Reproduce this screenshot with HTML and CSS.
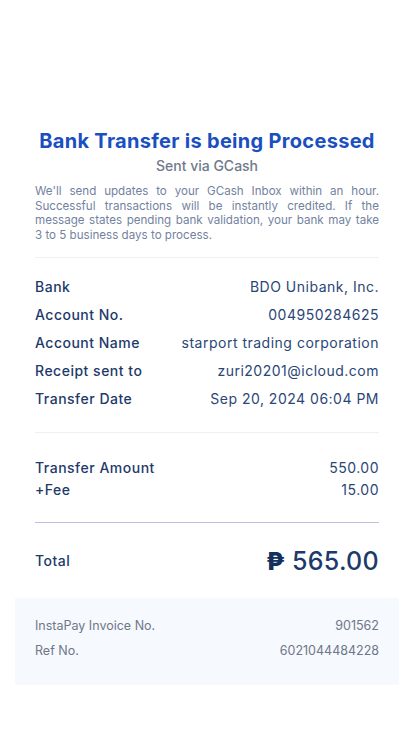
FILE: index.html
```html
<!DOCTYPE html>
<html lang="en">
<head>
    <meta charset="UTF-8">
    <meta name="viewport" content="width=device-width, initial-scale=1.0">
    <title>Bank Transfer</title>
    <link rel="stylesheet" href="styles.css">
</head>
<body>
    <div class="receipt">
        <div class="header">
            <h1 class="title">Bank Transfer is being Processed</h1>
            <div class="subtitle">Sent via GCash</div>
            <p class="note">We'll send updates to your GCash Inbox within an hour. Successful transactions will be instantly credited. If the message states pending bank validation, your bank may take 3 to 5 business days to process.</p>
        </div>

        <div class="details">
            <div class="row"><span class="label">Bank</span><span class="value">BDO Unibank, Inc.</span></div>
            <div class="row"><span class="label">Account No.</span><span class="value">004950284625</span></div>
            <div class="row"><span class="label">Account Name</span><span class="value">starport trading corporation</span></div>
            <div class="row"><span class="label">Receipt sent to</span><span class="value">zuri20201@icloud.com</span></div>
            <div class="row"><span class="label">Transfer Date</span><span class="value">Sep 20, 2024 06:04 PM</span></div>
        </div>

        <div class="amounts">
            <div class="row row-sm"><span class="label">Transfer Amount</span><span class="value">550.00</span></div>
            <div class="row row-sm"><span class="label">+Fee</span><span class="value">15.00</span></div>
        </div>

        <div class="total">
            <span class="label">Total</span>
            <span class="total-amount"><span class="peso">₱</span> 565.00</span>
        </div>
    </div>

    <div class="refs">
        <div class="ref-row"><span>InstaPay Invoice No.</span><span>901562</span></div>
        <div class="ref-row"><span>Ref No.</span><span>6021044484228</span></div>
    </div>
</body>
</html>
```

FILE: styles.css
```css
:root {
    --blue: #1a4fbf;
    --navy: #1d3a6a;
    --grey: #6e7789;
    --line: #eef0f4;
}

* {
    margin: 0;
    padding: 0;
    box-sizing: border-box;
    font-family: Inter, 'Noto Sans', sans-serif;
}

body {
    background: white;
    width: 414px;
    min-height: 736px;
}

.receipt {
    padding: 0 35px;
}

.header {
    padding-top: 129px;
    padding-bottom: 15px;
    border-bottom: 1px solid var(--line);
    text-align: center;
}

.title {
    color: var(--blue);
    font-size: 20px;
    line-height: 24px;
    font-weight: 700;
    letter-spacing: 0.3px;
}

.subtitle {
    color: #6f7a8c;
    font-size: 14px;
    line-height: 20px;
    font-weight: 500;
    margin-top: 3px;
}

.note {
    color: #7382a0;
    font-size: 11.6px;
    line-height: 14.5px;
    text-align: justify;
    margin-top: 8px;
}

.details {
    padding: 14px 0 20px;
    border-bottom: 1px solid var(--line);
}

.row {
    display: flex;
    justify-content: space-between;
    align-items: center;
    height: 28px;
    color: var(--navy);
    font-size: 14px;
    letter-spacing: 0.5px;
}

.row .label {
    font-weight: 500;
}

.row .value {
    font-weight: 400;
    color: #2a4676;
}

.amounts {
    padding: 23px 0 22px;
    border-bottom: 1px solid #bcc1e0;
}

.row-sm {
    height: 22px;
}

.total {
    display: flex;
    justify-content: space-between;
    align-items: center;
    height: 75px;
    color: var(--navy);
}

.total .label {
    font-size: 14px;
    font-weight: 500;
    letter-spacing: 0.5px;
}

.total-amount {
    font-size: 25px;
    font-weight: 500;
    letter-spacing: 0.3px;
}

.peso {
    font-weight: 800;
    color: #15305c;
}

.refs {
    margin: 0 15px;
    background: #f6f9fd;
    padding: 15px 20px 22px;
}

.ref-row {
    display: flex;
    justify-content: space-between;
    align-items: center;
    height: 25px;
    color: var(--grey);
    font-size: 12.5px;
}
```
